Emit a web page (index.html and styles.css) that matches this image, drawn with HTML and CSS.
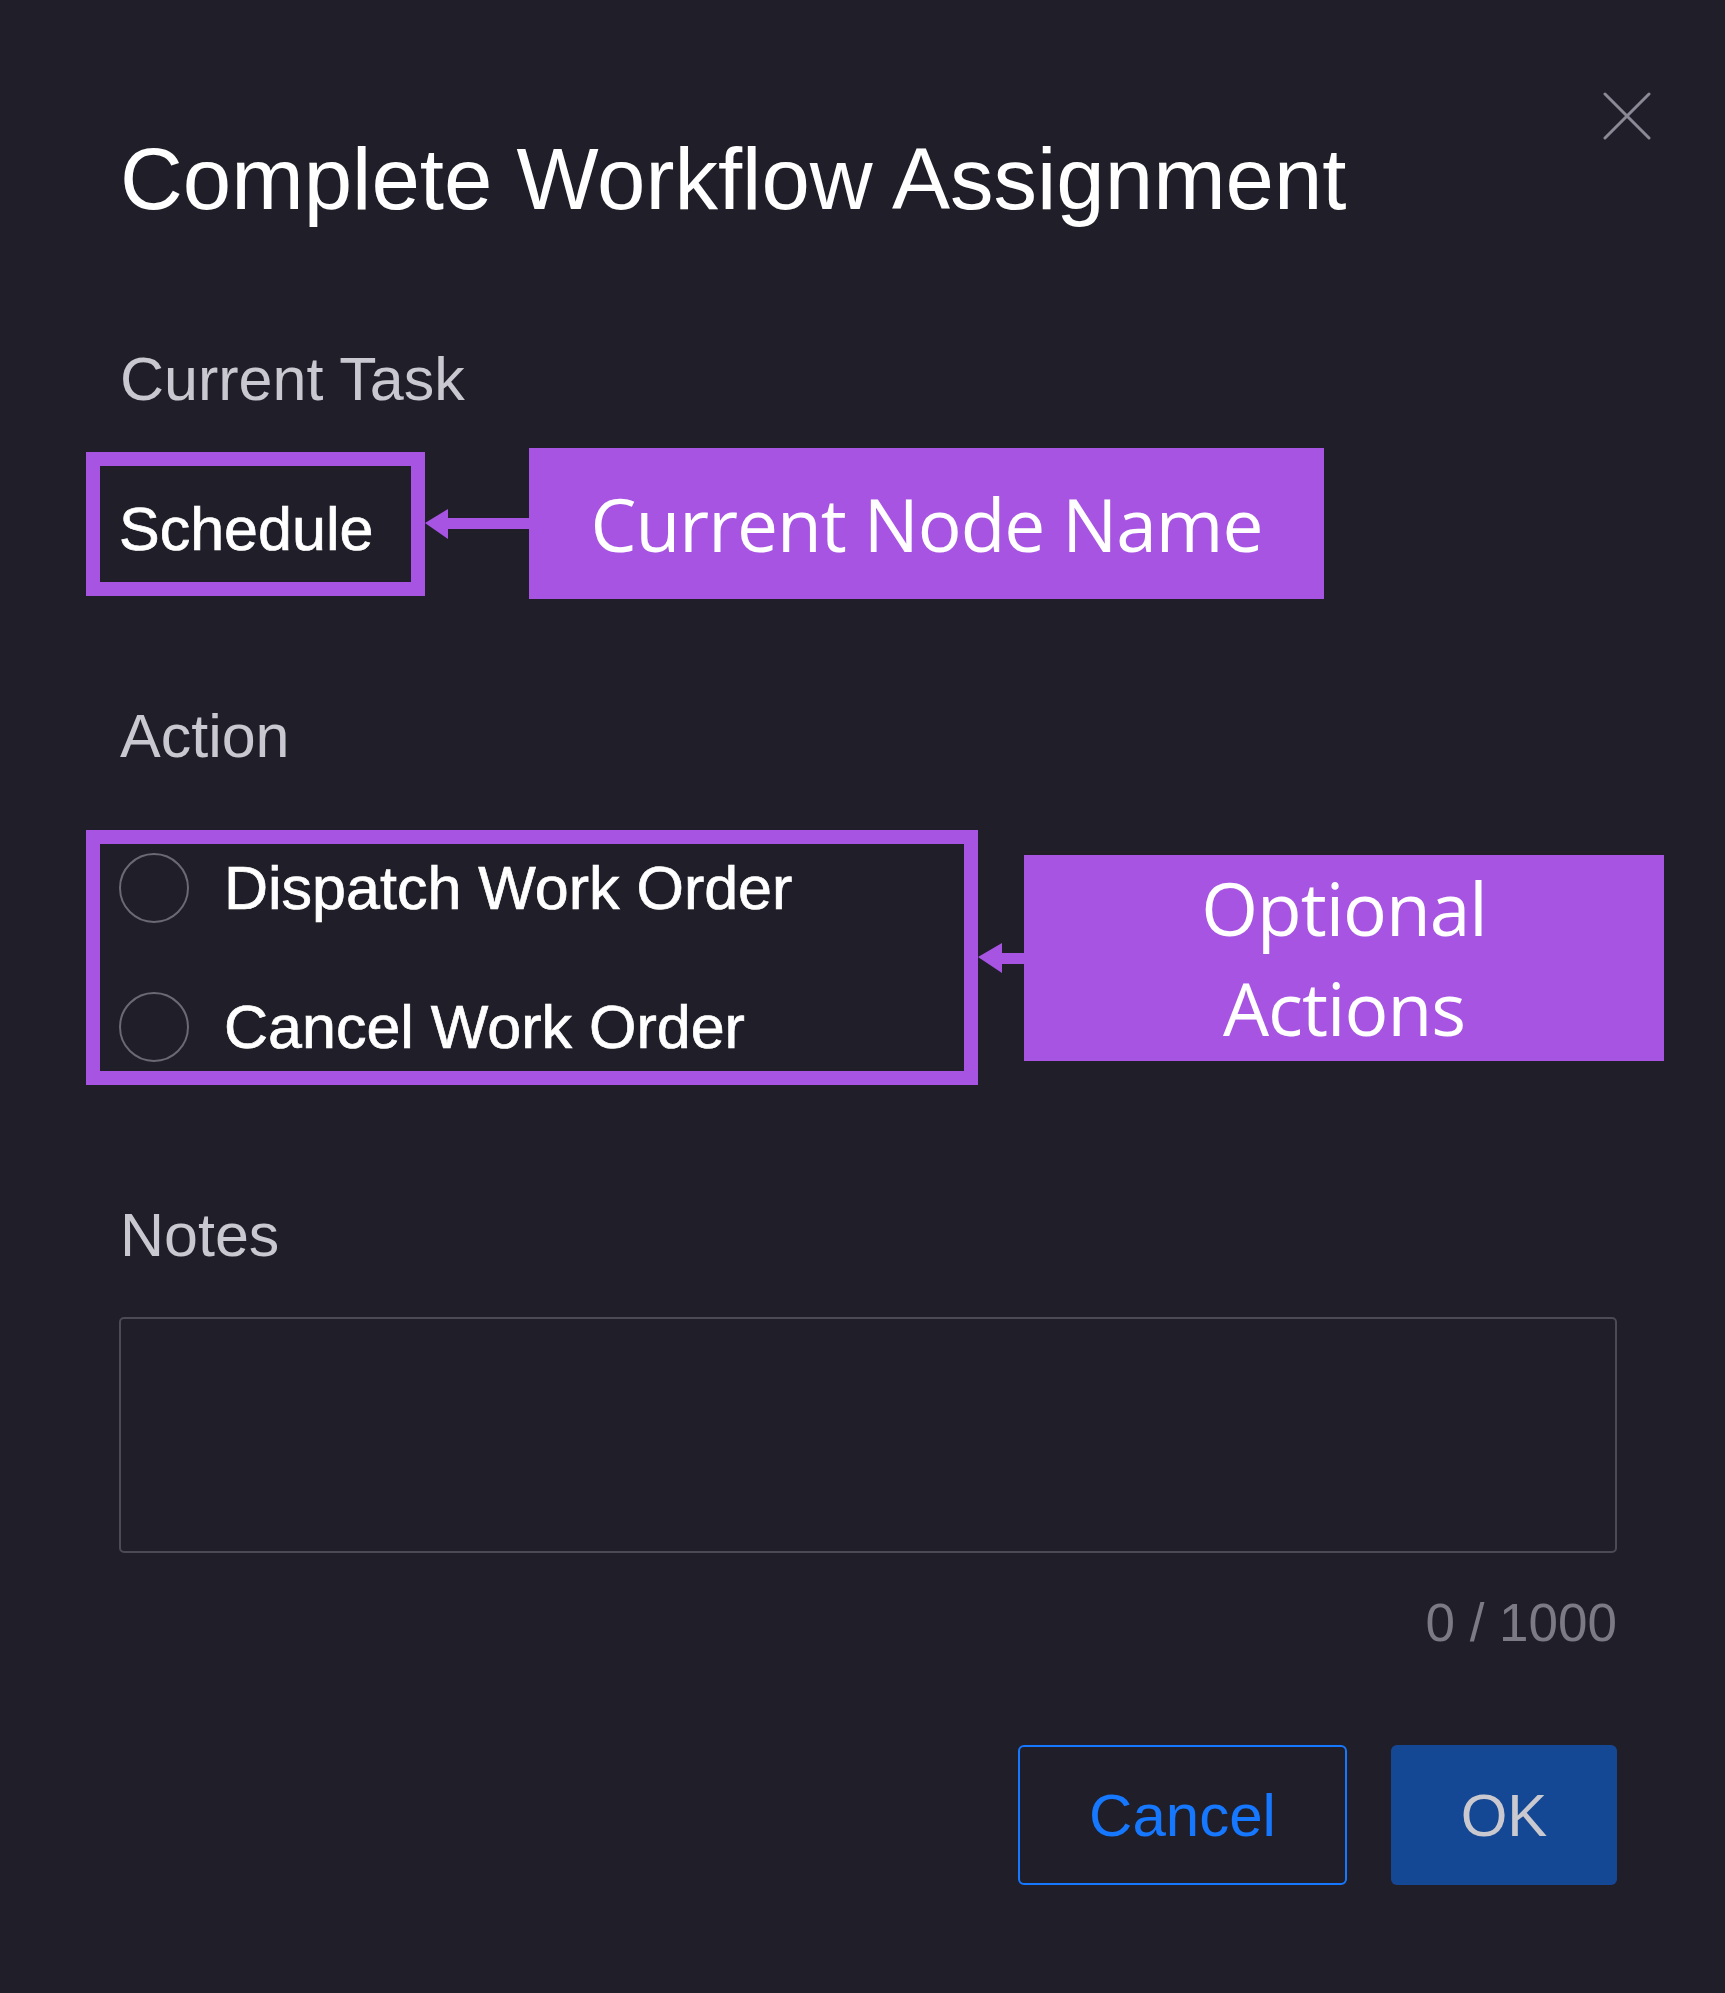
FILE: index.html
```html
<!DOCTYPE html>
<html lang="en">
<head>
<meta charset="utf-8">
<title>Complete Workflow Assignment</title>
<link rel="stylesheet" href="styles.css">
</head>
<body>
<div class="dialog">
  <button class="close" aria-label="Close">
    <svg width="48" height="48" viewBox="0 0 48 48"><path d="M2 2 L46 46 M46 2 L2 46" stroke="#8a8995" stroke-width="3" stroke-linecap="round" fill="none"/></svg>
  </button>
  <h1 class="title">Complete Workflow Assignment</h1>

  <div class="label label-task">Current Task</div>
  <div class="annot-row row-task">
    <div class="annot-box box-task"><span class="value">Schedule</span></div>
    <svg class="arrow" width="104" height="30" viewBox="0 0 104 30"><path d="M0 14 L23 0 L23 9 L104 9 L104 20 L23 20 L23 30 Z" fill="#a754e3"/></svg>
    <div class="callout callout-task">Current Node Name</div>
  </div>

  <div class="label label-action">Action</div>
  <div class="annot-row row-action">
    <div class="annot-box box-action">
      <label class="option"><span class="radio"></span><span class="option-text">Dispatch Work Order</span></label>
      <label class="option"><span class="radio"></span><span class="option-text">Cancel Work Order</span></label>
    </div>
    <svg class="arrow" width="46" height="30" viewBox="0 0 46 30"><path d="M0 14 L24 0 L24 10 L46 10 L46 21 L24 21 L24 30 Z" fill="#a754e3"/></svg>
    <div class="callout callout-action">Optional<br>Actions</div>
  </div>

  <div class="label label-notes">Notes</div>
  <textarea class="notes-input" aria-label="Notes"></textarea>
  <div class="counter">0 / 1000</div>

  <div class="footer">
    <button class="btn btn-cancel">Cancel</button>
    <button class="btn btn-ok">OK</button>
  </div>
</div>
</body>
</html>
```

FILE: styles.css
```css
html, body {
  margin: 0;
  padding: 0;
  background: #201f29;
}

body {
  font-family: "Liberation Sans", Arial, sans-serif;
  color: #ffffff;
}

.dialog {
  position: relative;
  padding: 126px 108px 0 120px;
  min-height: 1993px;
  box-sizing: border-box;
}

.close {
  position: absolute;
  top: 92px;
  right: 74px;
  width: 48px;
  height: 48px;
  padding: 0;
  border: 0;
  background: transparent;
  display: block;
}

.close svg {
  display: block;
}

.title {
  margin: 0;
  font-size: 87px;
  line-height: 106px;
  font-weight: 400;
  color: #ffffff;
}

.label {
  font-size: 61px;
  line-height: 72px;
  color: #c9c8d0;
}

.label-task {
  margin-top: 111px;
}

.label-action {
  margin-top: 101px;
}

.label-notes {
  margin-top: 114px;
}

.annot-row {
  display: flex;
  align-items: center;
  margin-left: -34px;
}

.row-task {
  margin-top: 33px;
}

.row-action {
  margin-top: 58px;
}

.annot-box {
  flex-shrink: 0;
  box-sizing: border-box;
  border: 14px solid #a754e3;
}

.box-task {
  width: 339px;
  height: 144px;
  padding: 27px 0 0 19px;
}

.value {
  display: block;
  font-size: 61px;
  line-height: 72px;
  color: #ffffff;
  -webkit-text-stroke: 0.7px #ffffff;
}

.box-action {
  width: 892px;
  height: 255px;
  padding: 8px 0 0 19px;
  display: flex;
  flex-direction: column;
  gap: 67px;
}

.option {
  display: flex;
  align-items: center;
  height: 72px;
  gap: 35px;
}

.radio {
  width: 70px;
  height: 70px;
  box-sizing: border-box;
  border: 2px solid #6a6974;
  border-radius: 50%;
  flex-shrink: 0;
}

.option-text {
  font-size: 61px;
  line-height: 72px;
  color: #ffffff;
  -webkit-text-stroke: 0.7px #ffffff;
  white-space: nowrap;
}

.arrow {
  display: block;
  flex-shrink: 0;
}

.callout {
  flex-shrink: 0;
  box-sizing: border-box;
  background: #a754e3;
  color: #ffffff;
  font-family: "Open Sans", "Noto Sans", sans-serif;
  font-size: 73px;
  letter-spacing: -1px;
  display: flex;
  align-items: center;
  justify-content: center;
  text-align: center;
}

.callout-task {
  width: 795px;
  height: 151px;
  line-height: 100px;
}

.callout-action {
  width: 640px;
  height: 206px;
  line-height: 100px;
}

.notes-input {
  display: block;
  box-sizing: border-box;
  width: 1498px;
  height: 236px;
  margin: 46px 0 0 -1px;
  padding: 0;
  background: transparent;
  border: 2px solid #4b4a55;
  border-radius: 5px;
  resize: none;
  outline: none;
}

.counter {
  margin-top: 38px;
  text-align: right;
  font-size: 53px;
  line-height: 64px;
  color: #7b7a85;
}

.footer {
  margin-top: 90px;
  display: flex;
  justify-content: flex-end;
  gap: 44px;
}

.btn {
  box-sizing: border-box;
  height: 140px;
  font-family: "Liberation Sans", Arial, sans-serif;
  font-size: 60px;
  border-radius: 6px;
  padding: 0;
}

.btn-cancel {
  width: 329px;
  background: transparent;
  border: 2px solid #1677ff;
  color: #1677ff;
}

.btn-ok {
  width: 226px;
  background: #154894;
  border: 0;
  color: #c9c9cf;
}
```
